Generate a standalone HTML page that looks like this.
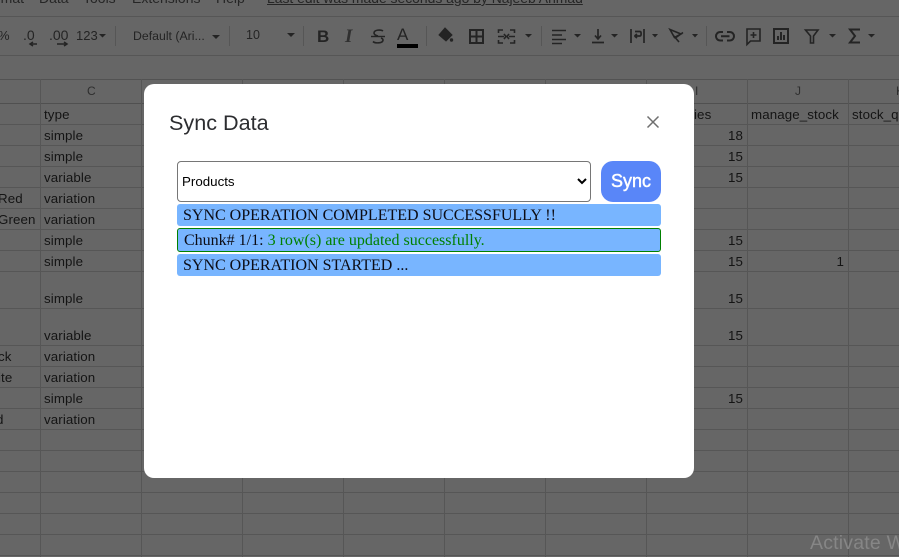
<!DOCTYPE html>
<html><head><meta charset="utf-8"><style>
html,body{margin:0;padding:0}
body{width:899px;height:557px;overflow:hidden;position:relative;background:#666;font-family:"Liberation Sans",sans-serif}
.h,.v{position:absolute;background:#565656}
.h{left:0;width:899px;height:1px}
.v{width:1px}
.t{position:absolute;font-size:13.33px;line-height:16px;color:#141414;white-space:nowrap;letter-spacing:.1px}
.r{text-align:right;width:40px}
.m{position:absolute;top:-11px;font-size:14px;line-height:18px;color:#262626;white-space:nowrap}
.b{position:absolute;font-size:13px;line-height:16px;color:#242424;white-space:nowrap}
.hd{position:absolute;top:84px;font-size:12px;line-height:14px;color:#2e2e2e;white-space:nowrap}
svg{position:absolute;left:0;top:0}
#modal{position:absolute;left:144px;top:84px;width:550px;height:394px;background:#fff;border-radius:10px}
#title{position:absolute;left:25px;top:25px;font-size:21.6px;line-height:28px;color:#2c2d30;white-space:nowrap}
select{position:absolute;left:33px;top:77px;width:414px;height:41px;box-sizing:border-box;font-family:"Liberation Sans",sans-serif;font-size:13.33px;background:#fff;color:#000;border:1px solid #767676;border-radius:4px;margin:0}
#sync{position:absolute;left:457px;top:77px;width:60px;height:41px;background:#5986f8;border-radius:12px;color:#fff;font-size:18px;line-height:40px;text-align:center;-webkit-text-stroke:.45px #fff}
.msg{position:absolute;left:33px;width:484px;box-sizing:border-box;background:#78b5ff;border-radius:3px;font-family:"Liberation Serif",serif;font-size:16px;color:#0c0c14;white-space:nowrap}
</style></head><body>
<div class="m" style="left:-4px">rmat</div>
<div class="m" style="left:39px">Data</div>
<div class="m" style="left:83px">Tools</div>
<div class="m" style="left:132px">Extensions</div>
<div class="m" style="left:216px">Help</div>
<div class="m" style="left:267px;text-decoration:underline;font-size:13.9px">Last edit was made seconds ago by Najeeb Ahmad</div>

<div class="h" style="top:16px"></div><div class="h" style="top:55px"></div><div class="h" style="top:79px;background:#525252"></div>
<div class="h" style="top:103px;background:#505050"></div>
<div class="h" style="top:124px"></div><div class="h" style="top:145px"></div><div class="h" style="top:166px"></div><div class="h" style="top:187px"></div><div class="h" style="top:208px"></div><div class="h" style="top:229px"></div><div class="h" style="top:250px"></div><div class="h" style="top:271px"></div><div class="h" style="top:308px"></div><div class="h" style="top:345px"></div><div class="h" style="top:366px"></div><div class="h" style="top:387px"></div><div class="h" style="top:408px"></div><div class="h" style="top:429px"></div><div class="h" style="top:450px"></div><div class="h" style="top:471px"></div><div class="h" style="top:492px"></div><div class="h" style="top:513px"></div><div class="h" style="top:534px"></div><div class="h" style="top:555px"></div>
<div class="v" style="left:40px;top:79px;height:478px"></div><div class="v" style="left:141px;top:79px;height:478px"></div><div class="v" style="left:242px;top:79px;height:478px"></div><div class="v" style="left:343px;top:79px;height:478px"></div><div class="v" style="left:444px;top:79px;height:478px"></div><div class="v" style="left:545px;top:79px;height:478px"></div><div class="v" style="left:646px;top:79px;height:478px"></div><div class="v" style="left:747px;top:79px;height:478px"></div><div class="v" style="left:848px;top:79px;height:478px"></div>

<div class="b" style="left:-2px;top:28px">%</div>
<div class="b" style="left:23px;top:27px;font-size:14px">.0</div>
<div class="b" style="left:49px;top:27px;font-size:14px">.00</div>
<div class="b" style="left:76px;top:28px">123</div>
<div class="b" style="left:133px;top:28px;font-size:12.3px">Default (Ari...</div>
<div class="b" style="left:246px;top:27px;font-size:12.5px">10</div>
<div class="b" style="left:317px;top:28px;font-size:17px;font-weight:bold;line-height:18px">B</div>
<div class="b" style="left:345px;top:27px;font-size:19px;font-family:'Liberation Serif',serif;font-weight:bold;font-style:italic;line-height:20px;color:#303030">I</div>
<div class="b" style="left:397px;top:26px;font-size:17px;line-height:18px">A</div>

<svg width="899" height="80" viewBox="0 0 899 80" fill="none" stroke="#242424" stroke-width="1.8">
<g stroke="#565656" stroke-width="1"><path d="M115.500 26V46M229.500 26V46M303.500 26V46M426.500 26V46M541.500 26V46M706.500 26V46"/></g>
<path d="M30 44H37M33 42L30 44L33 46M57 44H67M64 42L67 44L64 46" stroke-width="1.500"/>
<g fill="#242424" stroke="none"><path d="M99 34h7l-3.500 3.500zM212 35h8l-4 4zM287 33h8l-4 4zM525 34h7l-3.500 3.500zM574 34h7l-3.500 3.500zM611 34h7l-3.500 3.500zM652 34h6l-3 3.500zM692 34h6l-3 3.500zM829 34h7l-3.500 3.500zM868 34h7l-3.500 3.500z"/></g>
<path d="M371 36.500H385" stroke-width="1.400"/>
<path d="M383 31C381 29.500 374 29.500 374 33C374 34.500 376 35.500 378 36M381 38C382.500 38.500 383 39.500 383 40C383 43.500 375 43.500 373 41.500" stroke-width="1.600"/>
<rect x="397" y="44" width="21" height="4" fill="#000" stroke="none"/>
<path d="M445 28L452 35L446 41L439 35Z" fill="#242424" stroke-width="1"/><circle cx="451.500" cy="40" r="1.700" fill="#242424" stroke="none"/>
<path d="M470 30H483V43H470ZM476.500 30V43M470 36.500H483" stroke-width="2"/>
<path d="M498.500 33V30H503M510 30H514.500V33M498.500 40V43H503M510 43H514.500V40M498 36.500H504M509 36.500H515M504 34L506 36.500L504 39M509 34L507 36.500L509 39" stroke-width="1.600"/>
<path d="M552 30.500H566M552 35H562M552 39.500H566M552 43.500H562" stroke-width="1.600"/>
<path d="M592 42.500H604M598 29V38M595 35.500L598 39L601 35.500" stroke-width="1.700"/>
<path d="M631 29V43M644 29V43M634.500 36H640C641.500 36 641.500 31.500 640 31.500H635M634.500 36L637 34M634.500 36L637 38" stroke-width="1.700"/>
<path d="M670 29.500L681 34L674.500 37.500ZM673 35L679 42M676 37.500L683 32.500" stroke-width="1.600"/>
<path d="M723 32H720.500C714.500 32 714.500 40.500 720.500 40.500H723M727 32H729.500C735.500 32 735.500 40.500 729.500 40.500H727M721 36.200H729.500" stroke-width="2"/>
<path d="M747 29H760V41H750.500L747 44.500ZM753.500 32V38M750.500 35H756.500" stroke-width="1.600"/>
<path d="M774 29H788V43H774ZM778 36V40M781 32V40M784 35V40" stroke-width="2"/>
<path d="M805.500 30H818L813.500 36V43H810.500V36Z" stroke-width="1.600"/>
<path d="M859 30.500V29.500H850L855 36L850 42.500H859V41.500" stroke-width="2"/>
</svg>

<div class="hd" style="left:87px">C</div>
<div class="hd" style="left:695px">I</div>
<div class="hd" style="left:795px">J</div>
<div class="hd" style="left:896px">K</div>

<div class="t" style="left:44px;top:107px">type</div>
<div class="t" style="left:44px;top:128px">simple</div>
<div class="t" style="left:44px;top:149px">simple</div>
<div class="t" style="left:44px;top:170px">variable</div>
<div class="t" style="left:44px;top:191px">variation</div>
<div class="t" style="left:44px;top:212px">variation</div>
<div class="t" style="left:44px;top:233px">simple</div>
<div class="t" style="left:44px;top:254px">simple</div>
<div class="t" style="left:44px;top:291px">simple</div>
<div class="t" style="left:44px;top:328px">variable</div>
<div class="t" style="left:44px;top:349px">variation</div>
<div class="t" style="left:44px;top:370px">variation</div>
<div class="t" style="left:44px;top:391px">simple</div>
<div class="t" style="left:44px;top:412px">variation</div>
<div class="t" style="left:-2px;top:191px">Red</div>
<div class="t" style="left:-2px;top:212px">Green</div>
<div class="t" style="left:-2px;top:349px">ck</div>
<div class="t" style="left:-2px;top:370px">ite</div>
<div class="t" style="left:-4px;top:412px">d</div>
<div class="t" style="left:694px;top:107px">ies</div>
<div class="t" style="left:751px;top:107px">manage_stock</div>
<div class="t" style="left:852px;top:107px">stock_q</div>
<div class="t r" style="left:703px;top:128px">18</div>
<div class="t r" style="left:703px;top:149px">15</div>
<div class="t r" style="left:703px;top:170px">15</div>
<div class="t r" style="left:703px;top:233px">15</div>
<div class="t r" style="left:703px;top:254px">15</div>
<div class="t r" style="left:703px;top:291px">15</div>
<div class="t r" style="left:703px;top:328px">15</div>
<div class="t r" style="left:703px;top:391px">15</div>
<div class="t r" style="left:804px;top:254px">1</div>

<div style="position:absolute;left:810px;top:531px;font-size:19.5px;line-height:24px;color:#868686;white-space:nowrap;letter-spacing:.2px">Activate W</div>

<div id="modal">
<div id="title">Sync Data</div>
<svg width="550" height="60" viewBox="0 0 550 60" fill="none" stroke="#6f6f6f" stroke-width="1.500"><path d="M503.500 32.500L514.500 43.500M514.500 32.500L503.500 43.500"/></svg>
<select><option>Products</option></select>
<div id="sync">Sync</div>
<div class="msg" style="top:120px;height:22px;line-height:23px;padding-left:6px">SYNC OPERATION COMPLETED SUCCESSFULLY !!</div>
<div class="msg" style="top:144px;height:24px;line-height:24px;padding-left:6px;border:1px solid #008000">Chunk# 1/1: <span style="color:#008000">3 row(s) are updated successfully.</span></div>
<div class="msg" style="top:170px;height:22px;line-height:23px;padding-left:6px">SYNC OPERATION STARTED ...</div>
</div>
</body></html>
